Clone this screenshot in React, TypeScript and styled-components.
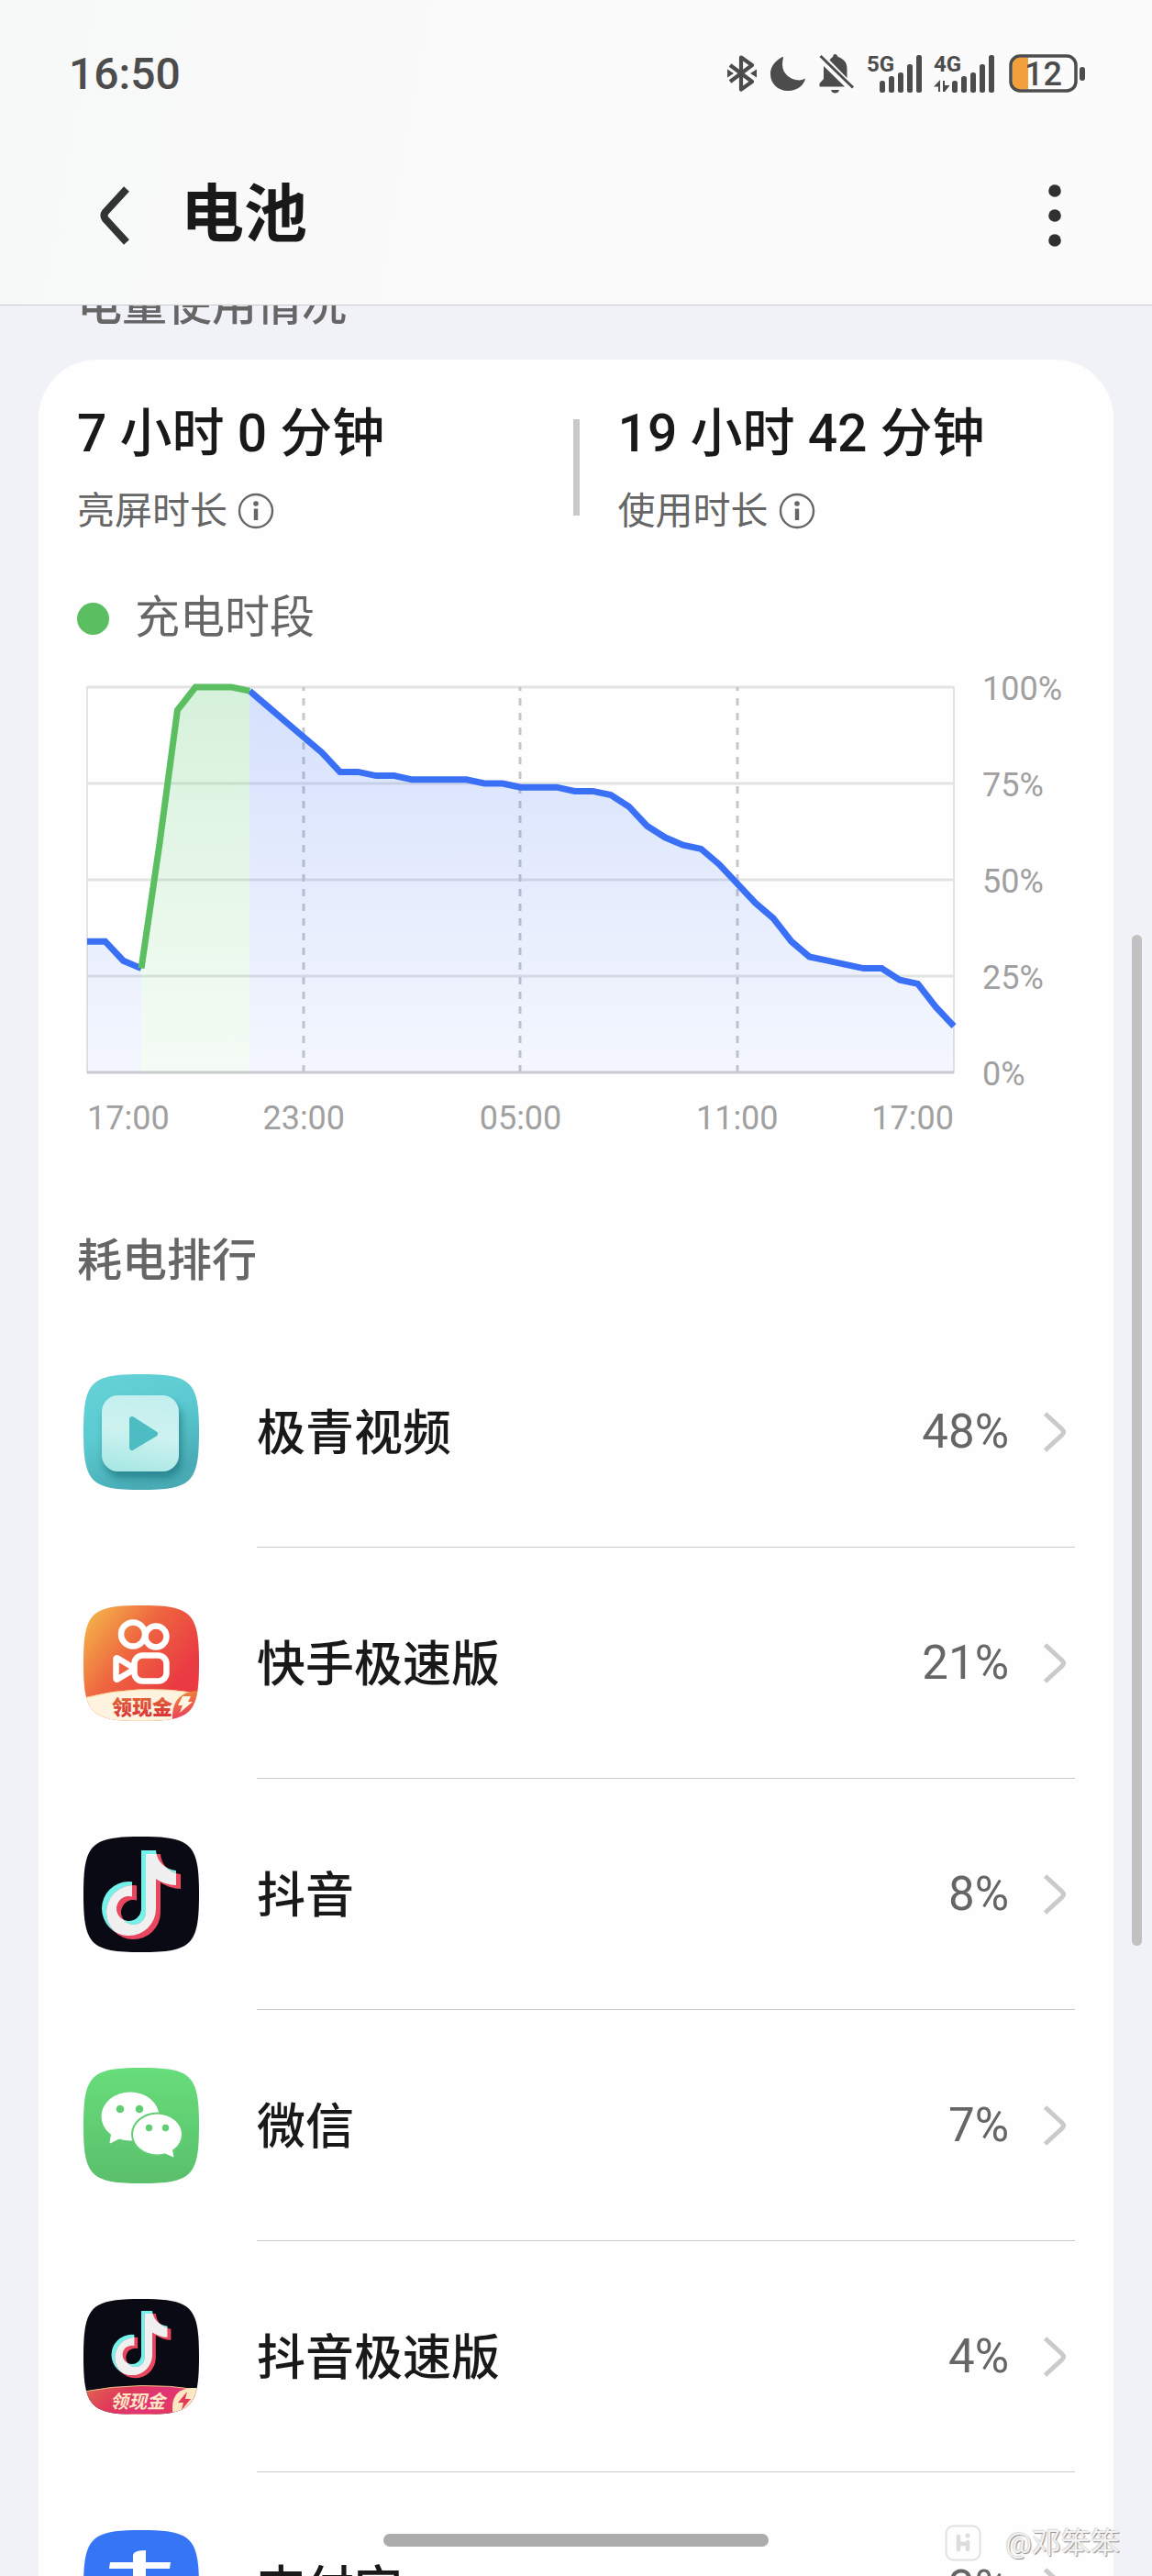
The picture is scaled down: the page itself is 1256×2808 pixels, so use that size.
import React from 'react';
import styled, { createGlobalStyle } from 'styled-components';

const GlobalStyle = createGlobalStyle`
    * {
        box-sizing: border-box;
    }

    body {
        margin: 0;
        background: #f1f2f7;
        font-family: Roboto, 'Noto Sans CJK SC', sans-serif;
    }

    button {
        padding: 0;
        border: 0;
        background: none;
        color: inherit;
        font: inherit;
        cursor: pointer;
    }

    svg {
        display: block;
        flex: none;
        overflow: visible;
    }
`;

const Screen = styled.div`
    position: relative;
    display: flex;
    flex-direction: column;
    height: 100vh;
    overflow: hidden;
`;

const Header = styled.header`
    flex: none;
    padding-bottom: 22px;
    border-bottom: 1px solid #c9cacc;
    background: linear-gradient(100deg, #f7f8f8, #fbfbfb 60%);
`;

const StatusBar = styled.div`
    display: flex;
    align-items: center;
    justify-content: space-between;
    height: 160px;
    padding: 0 72px 0 75px;
    color: #4c4c4c;
`;

const Clock = styled.time`
    font-size: 48px;
    font-weight: 500;
`;

const StatusIcons = styled.div`
    display: flex;
    align-items: center;
    gap: 13px;
`;

const TitleBar = styled.div`
    display: flex;
    align-items: center;
    height: 150px;
    padding: 0 82px 0 101px;
`;

const IconButton = styled.button`
    display: flex;
    align-items: center;
    justify-content: center;
    width: 48px;
    height: 72px;
`;

const Title = styled.h1`
    flex: 1;
    margin: 0 0 0 48px;
    color: #191919;
    font-size: 69px;
    font-weight: 700;
    line-height: 96px;
`;

const Content = styled.main`
    flex: 1;
    min-height: 0;
    padding: 0 42px;
    overflow: hidden;
`;

const SectionTitle = styled.h2<{ scrolled?: boolean }>`
    margin: ${({ scrolled }) => (scrolled ? '-28px 42px 31px' : '106px 0 32px')};
    color: #666;
    font-size: 49px;
    font-weight: 500;
    line-height: 56px;
`;

const Card = styled.section`
    padding: 45px 42px 0;
    border-radius: 64px;
    background: #fefefe;
`;

const Stats = styled.div`
    display: grid;
    grid-template-columns: 1fr 7px 1fr;
`;

const Stat = styled.div<{ inset?: boolean }>`
    padding-left: ${({ inset }) => (inset ? '42px' : '0')};
`;

const StatValue = styled.div`
    color: #191919;
    font-size: 57px;
    font-weight: 500;
    line-height: 72px;
`;

const StatLabel = styled.div`
    display: flex;
    align-items: center;
    gap: 11px;
    margin-top: 20px;
    color: #666;
    font-size: 41px;
    line-height: 56px;
`;

const Divider = styled.div`
    margin: 20px 0 23px;
    background: #c9c9c9;
`;

const Legend = styled.div`
    display: flex;
    align-items: center;
    gap: 28px;
    margin-top: 61px;
    color: #666;
    font-size: 49px;
    line-height: 56px;

    &::before {
        width: 35px;
        height: 35px;
        border-radius: 50%;
        background: #5bbf61;
        content: '';
    }
`;

const Chart = styled.div`
    display: grid;
    grid-template-columns: 1fr 132px;
    row-gap: 28px;
    margin: 47px 0 0 11px;
    color: #a0a0a0;
    font-size: 36px;
    line-height: 44px;
`;

const Plot = styled.svg`
    width: 100%;
    height: 420px;
`;

const LevelAxis = styled.div`
    display: flex;
    flex-direction: column;
    justify-content: space-between;
    margin: -20px 0 -24px;
    padding-left: 31px;
`;

const TimeAxis = styled.div`
    display: grid;
    grid-template-columns: 1fr 2fr 2fr 2fr 1fr;
    text-align: center;

    & > :first-child {
        text-align: left;
    }

    & > :last-child {
        justify-self: end;
    }
`;

const AppList = styled.ul`
    margin: 0;
    padding: 0;
    list-style: none;
`;

const AppRow = styled.button`
    display: flex;
    align-items: center;
    gap: 63px;
    width: 100%;
    height: 252px;
    padding-left: 7px;
    text-align: left;
`;

const AppInfo = styled.span`
    display: flex;
    flex: 1;
    align-items: center;
    height: 252px;
    padding-right: 9px;
    border-bottom: 1px solid #cacaca;
`;

const AppName = styled.span`
    flex: 1;
    padding-bottom: 6px;
    color: #191919;
    font-size: 53px;
    font-weight: 500;
`;

const AppUsage = styled.span`
    margin-right: 37px;
    color: #666;
    font-size: 51px;
`;

const ScrollThumb = styled.div`
    position: absolute;
    top: 1019px;
    right: 11px;
    width: 11px;
    height: 1102px;
    border-radius: 6px;
    background: #c1c1c1;
`;

const HomeIndicator = styled.div`
    position: absolute;
    bottom: 32px;
    left: 50%;
    width: 420px;
    height: 14px;
    margin-left: -210px;
    border-radius: 7px;
    background: #acacac;
`;

const Watermark = styled.div`
    position: absolute;
    right: 35px;
    bottom: 12px;
    display: flex;
    align-items: center;
    gap: 26px;
    color: #f2f2f2;
    font-size: 32px;
    line-height: 48px;
    text-shadow: 1px 1px 1px #8c8c8c, -1px -1px 1px #d8d8d8;
`;

// battery level every half hour
const LEVELS = [
    34, 34, 29, 27, 59, 94, 100, 100, 100, 99, 95, 91, 87, 83, 78, 78, 77, 77, 76, 76, 76, 76, 75, 75, 74,
    74, 74, 73, 73, 72, 69, 64, 61, 59, 58, 54, 49, 44, 40, 34, 30, 29, 28, 27, 27, 24, 23, 17, 12
];
const PLOT_WIDTH = 945;
const PLOT_HEIGHT = 420;
const STEP = PLOT_WIDTH / (LEVELS.length - 1);

const SEGMENTS = [
    { from: 0, to: 3, kind: 'use' },
    { from: 9, to: 48, kind: 'use' },
    { from: 3, to: 9, kind: 'charge' }
];

const linePath = (from: number, to: number) =>
    LEVELS.slice(from, to + 1)
        .map((level, i) => `${i ? 'L' : 'M'}${(from + i) * STEP} ${PLOT_HEIGHT * (1 - level / 100)}`)
        .join('');

const BatteryPlot = () => (
    <Plot viewBox={`0 0 ${PLOT_WIDTH} ${PLOT_HEIGHT}`} preserveAspectRatio='none' role='img' aria-label='电量曲线'>
        <defs>
            <linearGradient id='use' gradientUnits='userSpaceOnUse' x1='0' y1='0' x2='0' y2='420'>
                <stop offset='0' stopColor='#3a70f5' stopOpacity='0.21' />
                <stop offset='1' stopColor='#3a70f5' stopOpacity='0.05' />
            </linearGradient>
            <linearGradient id='charge' gradientUnits='userSpaceOnUse' x1='0' y1='0' x2='0' y2='420'>
                <stop offset='0' stopColor='#4fc567' stopOpacity='0.23' />
                <stop offset='1' stopColor='#5fd86a' stopOpacity='0.06' />
            </linearGradient>
        </defs>
        <path d='M0 0H945V420H0Z' fill='none' stroke='#e4e4e4' strokeWidth='2' />
        <path d='M0 0H945M0 105H945M0 210H945M0 315H945' fill='none' stroke='#e3e3e3' strokeWidth='3' />
        <path
            d='M236 0V420M472 0V420M709 0V420'
            fill='none'
            stroke='#c6c7ca'
            strokeWidth='3'
            strokeDasharray='8 8'
            strokeDashoffset='4'
        />
        <path d='M0 420H945' stroke='#cbccd0' strokeWidth='3' />
        {SEGMENTS.map(({ from, to, kind }) => (
            <g key={from}>
                <path d={`${linePath(from, to)}V420H${from * STEP}Z`} fill={`url(#${kind})`} />
                <path
                    d={linePath(from, to)}
                    fill='none'
                    stroke={kind === 'use' ? '#3a70f5' : '#5bbf61'}
                    strokeWidth='7'
                />
            </g>
        ))}
    </Plot>
);

const InfoIcon = () => (
    <svg width='40' height='40' viewBox='0 0 40 40' aria-hidden='true'>
        <circle cx='20' cy='20' r='18' fill='none' stroke='#666' strokeWidth='2.4' />
        <circle cx='20' cy='12' r='2.8' fill='#666' />
        <path d='M20 17.5V30' stroke='#666' strokeWidth='4.4' />
    </svg>
);

const BluetoothIcon = () => (
    <svg width='34' height='42' viewBox='0 0 34 42' aria-hidden='true'>
        <path
            d='M4 12L28 30L16 38.5V3.5L28 12L4 30'
            fill='none'
            stroke='#4c4c4c'
            strokeWidth='4.2'
            strokeLinejoin='round'
        />
        <path d='M1 16.5L8 21L1 25.5ZM33 16.5L26 21L33 25.5Z' fill='#4c4c4c' />
    </svg>
);

const MoonIcon = () => (
    <svg width='40' height='40' viewBox='0 0 40 40' aria-hidden='true'>
        <path
            d='M14 2C13 3 1 8 1 21C1 31 9 39 20 39C31 39 38 32 39 25.5C35 28 30 28 25 26C16 22 12 14 15 3Q15 1.5 14 2Z'
            fill='#4c4c4c'
        />
    </svg>
);

const MutedIcon = () => (
    <svg width='40' height='44' viewBox='0 0 40 44' aria-hidden='true'>
        <path
            d='M18 1C20 1 21 2 21.5 4C28 6 31.5 10 31.5 17V27L12.5 7.5Q14 5 16 4Q16.500 1 18 1ZM6 14L29 36.5H1.5V33L6 28ZM14 40H23Q22 43.5 18.5 43.5T14 40Z'
            fill='#4c4c4c'
        />
        <path d='M2.5 3L38 37.5' stroke='#4c4c4c' strokeWidth='3' />
    </svg>
);

const Signal = ({ label, data }: { label: string; data?: boolean }) => (
    <svg width={data ? 69 : 60} height='42' viewBox={data ? '0 0 69 42' : '0 0 60 42'} aria-hidden='true'>
        <text x='0' y='19' fontSize='24' fontWeight='700' fill='#4c4c4c'>
            {label}
        </text>
        <g transform={data ? 'translate(20 0)' : 'translate(14 0)'} fill='#4c4c4c'>
            <rect x='0' y='29' width='6' height='13' rx='2.5' />
            <rect x='10' y='24' width='6' height='18' rx='2.5' />
            <rect x='20' y='20' width='6' height='22' rx='2.5' />
            <rect x='30' y='11' width='6' height='31' rx='2.5' />
            <rect x='40' y='1' width='6' height='41' rx='2.5' />
        </g>
        {data && <path d='M0 35.5L7 28V41H5V35.5ZM10 29H12V34H17.5L12 41H10Z' fill='#4c4c4c' />}
    </svg>
);

const BatteryIcon = () => (
    <svg width='84' height='42' viewBox='0 0 84 42' aria-hidden='true'>
        <path d='M12 3.5H21V38.5H12Q4 38.5 4 30V12Q4 3.5 12 3.5Z' fill='#f1a03c' />
        <rect x='2' y='2' width='71' height='38' rx='10' fill='none' stroke='#4c4c4c' strokeWidth='3.5' />
        <rect x='77' y='14' width='6' height='15' rx='3' fill='#4c4c4c' />
        <text x='17' y='34' fontSize='36' fontWeight='500' fill='#4c4c4c'>
            12
        </text>
    </svg>
);

const Chevron = () => (
    <svg width='26' height='44' viewBox='0 0 26 44' aria-hidden='true'>
        <path d='M2.5 2L21 19Q24 22 21 25L2.5 42' fill='none' stroke='#cacaca' strokeWidth='5' />
    </svg>
);

const NOTE =
    'M63 15H79C80 27 89 36 101 37V53C93 53 85 50 79 46V79A29.5 29.5 0 1 1 49.5 49Q51 49 53 49.3V65.4A13.5 13.5 0 1 0 63 78.5Z';

const Note = ({ id }: { id: string }) => (
    <>
        <clipPath id={id}>
            <path d={NOTE} />
        </clipPath>
        <path d={NOTE} fill='#74f3ec' />
        <path d={NOTE} fill='#e8475f' transform='translate(5 4)' />
        <g clipPath={`url(#${id})`}>
            <path d={NOTE} fill='#f0f0f0' transform='translate(5 4)' />
        </g>
    </>
);

const AppIcon = ({ children }: { children: React.ReactNode }) => (
    <svg width='126' height='126' viewBox='0 0 126 126' aria-hidden='true'>
        <clipPath id='squircle'>
            <path d='M0 63C0 8 8 0 63 0S126 8 126 63S118 126 63 126S0 118 0 63Z' />
        </clipPath>
        <g clipPath='url(#squircle)'>{children}</g>
    </svg>
);

const VideoLogo = () => (
    <AppIcon>
        <defs>
            <linearGradient id='videoBg' x1='0' y1='0' x2='0.4' y2='1'>
                <stop offset='0' stopColor='#65d3d8' />
                <stop offset='0.5' stopColor='#5ccbd1' />
                <stop offset='1' stopColor='#49abb5' />
            </linearGradient>
            <linearGradient id='videoTile' x1='0.6' y1='0' x2='0.4' y2='1'>
                <stop offset='0' stopColor='#c3efee' />
                <stop offset='0.5' stopColor='#cdf2f0' />
                <stop offset='1' stopColor='#a9e8e4' />
            </linearGradient>
            <filter id='tileShadow' x='-20%' y='-20%' width='150%' height='150%'>
                <feDropShadow dx='3' dy='7' stdDeviation='4' floodColor='#1f7480' floodOpacity='0.7' />
            </filter>
        </defs>
        <rect width='126' height='126' fill='url(#videoBg)' />
        <rect x='20' y='23' width='84' height='83' rx='18' fill='url(#videoTile)' filter='url(#tileShadow)' />
        <path d='M53 49L78 65L53 80Z' fill='#4dbdc3' stroke='#4dbdc3' strokeWidth='6' strokeLinejoin='round' />
    </AppIcon>
);

const KuaishouLogo = () => (
    <AppIcon>
        <defs>
            <linearGradient id='ksBg' x1='0' y1='0.1' x2='0.8' y2='0.7'>
                <stop offset='0' stopColor='#f4b649' />
                <stop offset='0.5' stopColor='#ee6540' />
                <stop offset='1' stopColor='#ea3a43' />
            </linearGradient>
            <linearGradient id='ksInk' x1='0' y1='0' x2='0' y2='1'>
                <stop offset='0' stopColor='#e2663a' />
                <stop offset='1' stopColor='#d92b36' />
            </linearGradient>
            <linearGradient id='ksLeaf' x1='0.2' y1='0' x2='0.5' y2='1'>
                <stop offset='0' stopColor='#f08f34' />
                <stop offset='1' stopColor='#e8365f' />
            </linearGradient>
        </defs>
        <rect width='126' height='126' fill='url(#ksBg)' />
        <g fill='none' stroke='#fff' strokeWidth='6.5' strokeLinejoin='round'>
            <circle cx='54' cy='31.5' r='13' />
            <circle cx='79' cy='34' r='11.5' />
            <rect x='55.5' y='54.5' width='35' height='28' rx='9' />
            <path d='M35.5 59Q35.5 56 38 58L53 67V71L38 80Q35.5 82 35.5 79Z' />
        </g>
        <path d='M0 101Q60 85 126 96V126H0Z' fill='#fdf3de' stroke='#f9d294' />
        <path d='M97 125C96 104 106 93 127 93C127 111 116 123 97 125Z' fill='url(#ksLeaf)' />
        <path d='M108 99H117L114 105H119L105 117L108 109H103Z' fill='#fff6e6' />
        <text x='31' y='119' fontSize='22' fontWeight='900' fill='url(#ksInk)'>
            领现金
        </text>
    </AppIcon>
);

const DouyinLogo = () => (
    <AppIcon>
        <rect width='126' height='126' fill='#0a0a14' />
        <Note id='note' />
    </AppIcon>
);

const DouyinLiteLogo = () => (
    <AppIcon>
        <defs>
            <linearGradient id='liteBand' x1='0' y1='0' x2='1' y2='0.3'>
                <stop offset='0' stopColor='#e0684f' />
                <stop offset='0.4' stopColor='#e03a5a' />
                <stop offset='0.7' stopColor='#e03478' />
                <stop offset='1' stopColor='#e23a58' />
            </linearGradient>
        </defs>
        <rect width='126' height='126' fill='#0a0a14' />
        <g transform='translate(15.4 1.7) scale(0.755)'>
            <Note id='noteLite' />
        </g>
        <path d='M0 101Q63 89 126 99V126H0Z' fill='url(#liteBand)' stroke='#f0bf86' />
        <path d='M97 126V117Q98 98 118 97H126V126Z' fill='#fde6c2' />
        <path d='M113 101L103 113H109L107 121L117 109H111Z' fill='#e23a58' />
        <text x='29' y='119' fontSize='20' fontWeight='700' fontStyle='italic' fill='#fde6c2'>
            领现金
        </text>
    </AppIcon>
);

const WechatLogo = () => (
    <AppIcon>
        <defs>
            <linearGradient id='wxBg' x1='0' y1='0' x2='0' y2='1'>
                <stop offset='0' stopColor='#67dd7b' />
                <stop offset='1' stopColor='#5abf6b' />
            </linearGradient>
        </defs>
        <rect width='126' height='126' fill='url(#wxBg)' />
        <ellipse cx='51' cy='53' rx='31.5' ry='26.5' fill='#fff' />
        <path d='M31 70L29 82L41 76Z' fill='#fff' stroke='#fff' strokeLinejoin='round' />
        <ellipse cx='80.5' cy='72.5' rx='28.5' ry='24' fill='#61ce73' />
        <ellipse cx='80.5' cy='72.5' rx='26.5' ry='22' fill='#fff' />
        <path d='M87 92L98 97L96 87Z' fill='#fff' stroke='#fff' strokeLinejoin='round' />
        <g fill='#61ce73'>
            <circle cx='40' cy='45' r='4.3' />
            <circle cx='61' cy='45' r='4.3' />
            <circle cx='71.5' cy='65.5' r='3.7' />
            <circle cx='89.5' cy='65.5' r='3.7' />
        </g>
    </AppIcon>
);

const AlipayLogo = () => (
    <AppIcon>
        <rect width='126' height='126' fill='#3676f6' />
        <path
            d='M68 22V35H95L94 42H68V54H90Q86 70 80 78L126 95V110L72 87Q58 101 42 101Q25 100 25 85Q27 70 44 70Q54 70 67 75Q72 68 74 60H35V54H54V42H28L29 35H54V27Q55 22 68 22Z'
            fill='#fff'
        />
    </AppIcon>
);

const APPS = [
    { name: '极青视频', usage: 48, Logo: VideoLogo },
    { name: '快手极速版', usage: 21, Logo: KuaishouLogo },
    { name: '抖音', usage: 8, Logo: DouyinLogo },
    { name: '微信', usage: 7, Logo: WechatLogo },
    { name: '抖音极速版', usage: 4, Logo: DouyinLiteLogo },
    { name: '支付宝', usage: 3, Logo: AlipayLogo }
];

const App: React.FC = () => (
    <>
        <GlobalStyle />
        <Screen>
            <Header>
                <StatusBar>
                    <Clock>16:50</Clock>
                    <StatusIcons>
                        <BluetoothIcon />
                        <MoonIcon />
                        <MutedIcon />
                        <Signal label='5G' />
                        <Signal label='4G' data />
                        <BatteryIcon />
                    </StatusIcons>
                </StatusBar>
                <TitleBar>
                    <IconButton aria-label='返回'>
                        <svg width='34' height='66' viewBox='0 0 34 66' aria-hidden='true'>
                            <path d='M30 4L7 29Q4 33 7 37L30 62' fill='none' stroke='#323434' strokeWidth='8' />
                        </svg>
                    </IconButton>
                    <Title>电池</Title>
                    <IconButton aria-label='更多'>
                        <svg width='14' height='70' viewBox='0 0 14 70' aria-hidden='true'>
                            <circle cx='7' cy='8' r='6.8' fill='#303030' />
                            <circle cx='7' cy='35' r='6.8' fill='#303030' />
                            <circle cx='7' cy='62' r='6.8' fill='#303030' />
                        </svg>
                    </IconButton>
                </TitleBar>
            </Header>
            <Content>
                <SectionTitle scrolled>电量使用情况</SectionTitle>
                <Card>
                    <Stats>
                        <Stat>
                            <StatValue>7 小时 0 分钟</StatValue>
                            <StatLabel>
                                亮屏时长
                                <InfoIcon />
                            </StatLabel>
                        </Stat>
                        <Divider />
                        <Stat inset>
                            <StatValue>19 小时 42 分钟</StatValue>
                            <StatLabel>
                                使用时长
                                <InfoIcon />
                            </StatLabel>
                        </Stat>
                    </Stats>
                    <Legend>充电时段</Legend>
                    <Chart>
                        <BatteryPlot />
                        <LevelAxis>
                            <span>100%</span>
                            <span>75%</span>
                            <span>50%</span>
                            <span>25%</span>
                            <span>0%</span>
                        </LevelAxis>
                        <TimeAxis>
                            <span>17:00</span>
                            <span>23:00</span>
                            <span>05:00</span>
                            <span>11:00</span>
                            <span>17:00</span>
                        </TimeAxis>
                    </Chart>
                    <SectionTitle>耗电排行</SectionTitle>
                    <AppList>
                        {APPS.map(({ name, usage, Logo }) => (
                            <li key={name}>
                                <AppRow>
                                    <Logo />
                                    <AppInfo>
                                        <AppName>{name}</AppName>
                                        <AppUsage>{usage}%</AppUsage>
                                        <Chevron />
                                    </AppInfo>
                                </AppRow>
                            </li>
                        ))}
                    </AppList>
                </Card>
            </Content>
            <ScrollThumb />
            <HomeIndicator />
            <Watermark>
                <svg width='40' height='40' viewBox='0 0 40 40' aria-hidden='true'>
                    <rect x='1.5' y='1.5' width='37' height='37' rx='8' fill='none' stroke='#e2e2e2' strokeWidth='2' />
                    <path d='M15 13V27M15 21H25M25 19V27' fill='none' stroke='#dcdcdc' strokeWidth='4.5' strokeLinecap='round' />
                    <circle cx='25' cy='12' r='2.5' fill='#dcdcdc' />
                </svg>
                @邓笨笨
            </Watermark>
        </Screen>
    </>
);

export default App;
